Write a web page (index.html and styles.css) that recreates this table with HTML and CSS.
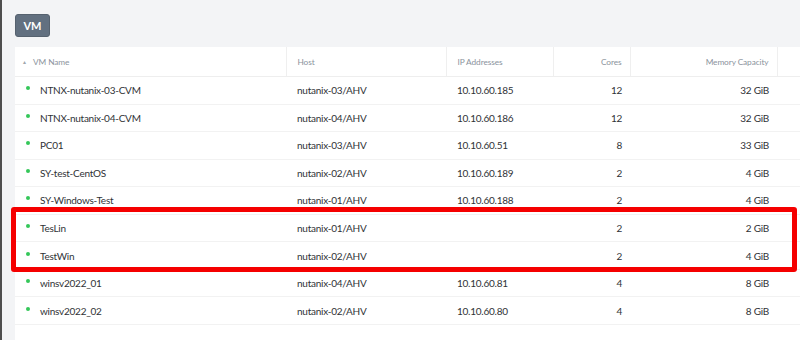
FILE: index.html
```html
<!DOCTYPE html>
<html lang="en">
<head>
    <meta charset="UTF-8">
    <title>VM List</title>
    <link rel="stylesheet" href="styles.css">
</head>
<body>
    <div class="toolbar">
        <button class="btn">VM</button>
    </div>

    <div class="vm-panel">
        <table class="vm-table">
            <colgroup>
                <col class="c-name">
                <col class="c-host">
                <col class="c-ip">
                <col class="c-cores">
                <col class="c-mem">
                <col>
            </colgroup>
            <thead>
                <tr>
                    <th class="name"><span class="sort">&#9652;</span>VM Name</th>
                    <th>Host</th>
                    <th>IP Addresses</th>
                    <th class="num">Cores</th>
                    <th class="num">Memory Capacity</th>
                    <th></th>
                </tr>
            </thead>
            <tbody>
                <tr><td class="name"><span class="dot"></span>NTNX-nutanix-03-CVM</td><td>nutanix-03/AHV</td><td>10.10.60.185</td><td class="num">12</td><td class="num">32 GiB</td><td></td></tr>
                <tr><td class="name"><span class="dot"></span>NTNX-nutanix-04-CVM</td><td>nutanix-04/AHV</td><td>10.10.60.186</td><td class="num">12</td><td class="num">32 GiB</td><td></td></tr>
                <tr><td class="name"><span class="dot"></span>PC01</td><td>nutanix-03/AHV</td><td>10.10.60.51</td><td class="num">8</td><td class="num">33 GiB</td><td></td></tr>
                <tr><td class="name"><span class="dot"></span>SY-test-CentOS</td><td>nutanix-02/AHV</td><td>10.10.60.189</td><td class="num">2</td><td class="num">4 GiB</td><td></td></tr>
                <tr><td class="name"><span class="dot"></span>SY-Windows-Test</td><td>nutanix-01/AHV</td><td>10.10.60.188</td><td class="num">2</td><td class="num">4 GiB</td><td></td></tr>
                <tr><td class="name"><span class="dot"></span>TesLin</td><td>nutanix-01/AHV</td><td></td><td class="num">2</td><td class="num">2 GiB</td><td></td></tr>
                <tr><td class="name"><span class="dot"></span>TestWin</td><td>nutanix-02/AHV</td><td></td><td class="num">2</td><td class="num">4 GiB</td><td></td></tr>
                <tr><td class="name"><span class="dot"></span>winsv2022_01</td><td>nutanix-04/AHV</td><td>10.10.60.81</td><td class="num">4</td><td class="num">8 GiB</td><td></td></tr>
                <tr><td class="name"><span class="dot"></span>winsv2022_02</td><td>nutanix-02/AHV</td><td>10.10.60.80</td><td class="num">4</td><td class="num">8 GiB</td><td></td></tr>
            </tbody>
        </table>
    </div>

    <div class="highlight"></div>
</body>
</html>
```

FILE: styles.css
```css
html, body {
    height: 100%;
}

body {
    margin: 0;
    padding: 14px 0 0 13px;
    box-sizing: border-box;
    display: flex;
    flex-direction: column;
    background: #f3f4f6;
    border-left: 2px solid #4e4e4e;
    font-family: Lato, "Open Sans", sans-serif;
    color: #333;
    overflow: hidden;
    position: relative;
}

.toolbar {
    height: 33px;
    flex: none;
}

.btn {
    width: 35px;
    height: 23px;
    padding: 0;
    border: 1px solid #56626f;
    border-radius: 3px;
    background: #627080;
    color: #fff;
    font-family: Lato, sans-serif;
    font-size: 11px;
    font-weight: bold;
    display: block;
}

.vm-panel {
    background: #fff;
    flex: 1;
}

.vm-table {
    width: 100%;
    border-collapse: collapse;
    table-layout: fixed;
}

.c-name { width: 271px; }
.c-host { width: 160px; }
.c-ip { width: 107px; }
.c-cores { width: 77px; }
.c-mem { width: 147px; }

.vm-table th {
    height: 29px;
    padding: 0 0 0 11px;
    text-align: left;
    font-size: 8.3px;
    font-weight: normal;
    letter-spacing: -0.1px;
    color: #8b939d;
    border-left: 1px solid #efefef;
    border-bottom: 1px solid #eeeeee;
}

.vm-table th.name {
    padding-left: 8px;
    border-left: none;
}

.sort {
    display: inline-block;
    width: 10px;
    font-size: 6px;
    color: #a0a6ad;
    vertical-align: 1px;
}

.vm-table td {
    height: 26.56px;
    padding: 0 0 0 11px;
    font-size: 10px;
    letter-spacing: -0.25px;
    color: #2f3236;
    border-bottom: 1px solid #f2f2f2;
    white-space: nowrap;
}

.vm-table .num {
    text-align: right;
    padding: 0 8px 0 0;
}

.dot {
    display: inline-block;
    width: 4px;
    height: 4px;
    border-radius: 50%;
    background: #34c759;
    margin-right: 10px;
    vertical-align: 4px;
}

.highlight {
    position: absolute;
    left: 9px;
    top: 207px;
    width: 776px;
    height: 55px;
    border: 5px solid #f50000;
    border-radius: 3px;
}
```
